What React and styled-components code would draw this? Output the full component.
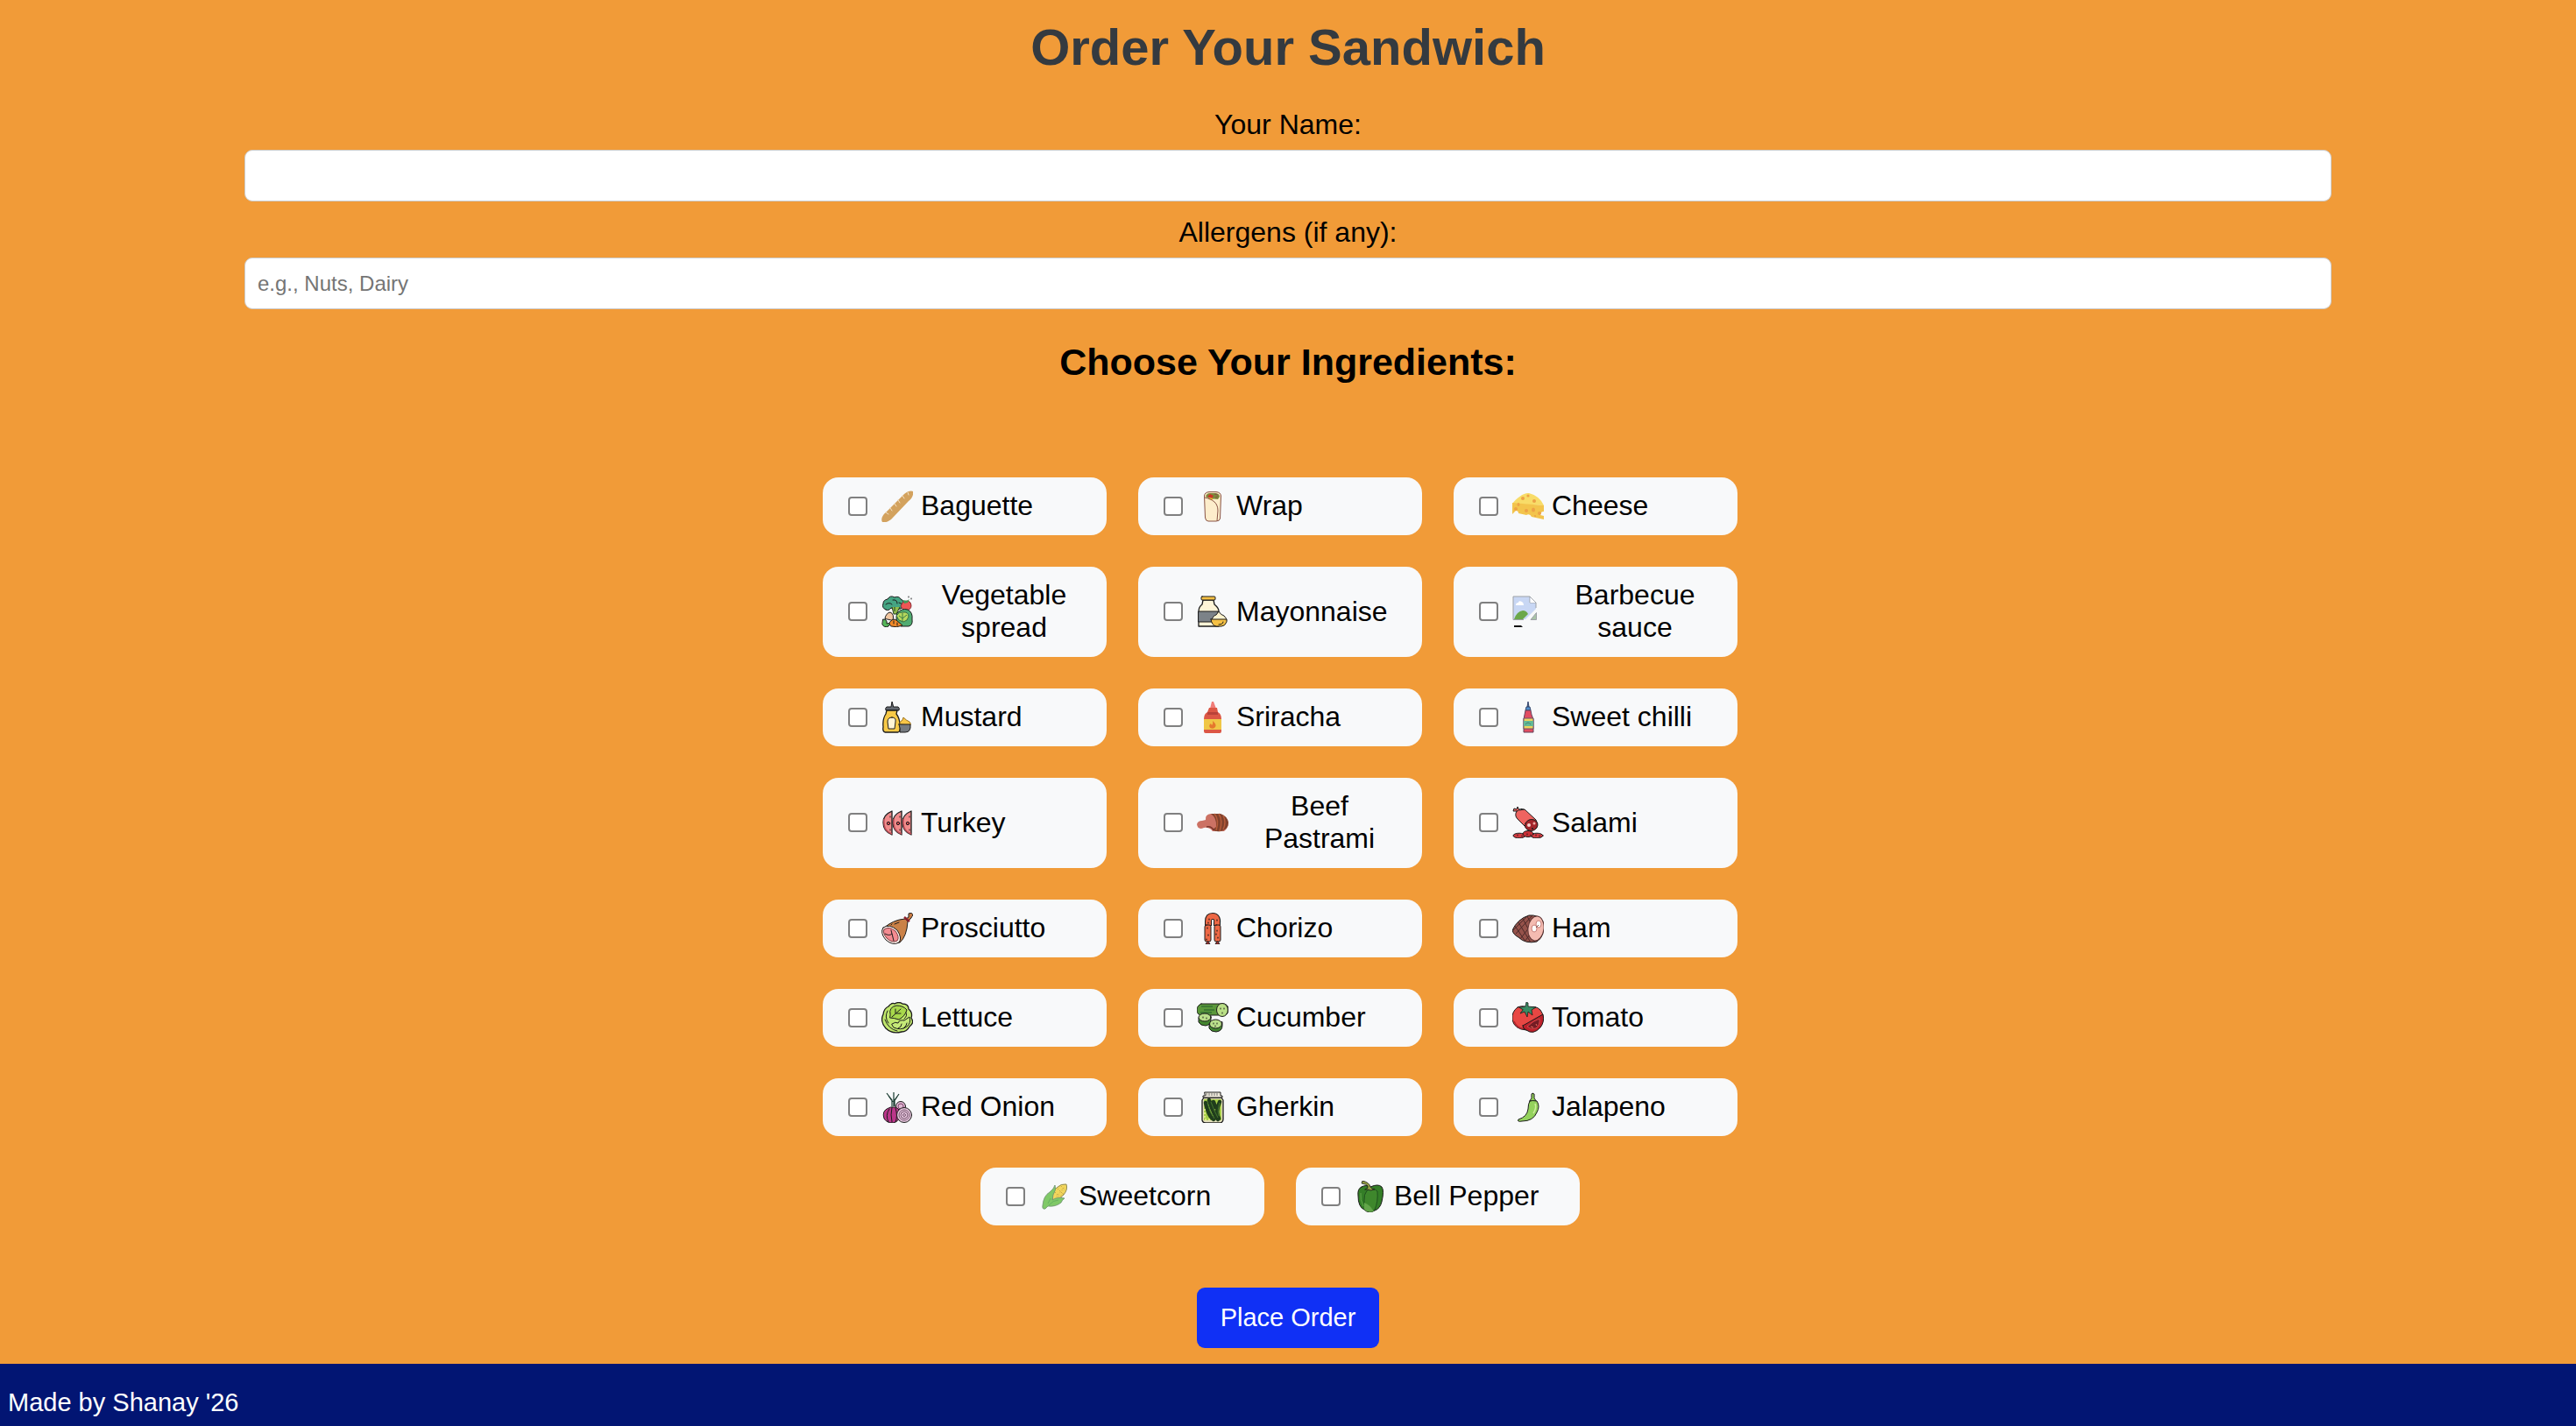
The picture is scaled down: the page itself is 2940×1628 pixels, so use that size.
import React from "react";
import styled, { createGlobalStyle } from "styled-components";

const GlobalStyle = createGlobalStyle`
  *, *::before, *::after { box-sizing: border-box; }
  body {
    margin: 0;
    background: #f19b38;
    color: #000;
    font-family: "Liberation Sans", Arial, sans-serif;
    font-size: 32px;
    line-height: 37px;
  }
`;

const Page = styled.div`
  min-height: 100vh;
  display: flex;
  flex-direction: column;
`;

const OrderForm = styled.form`
  display: flex;
  flex-direction: column;
  align-items: center;
  padding: 21px 0 18px;
  text-align: center;
`;

const Title = styled.h1`
  margin: 0 0 37px;
  color: #343a40;
  font-size: 58px;
  line-height: 66px;
`;

const Subtitle = styled.h2`
  margin: 18px 0 107px;
  font-size: 43px;
  line-height: 50px;
`;

const Field = styled.div`
  display: flex;
  flex-direction: column;
  align-items: center;
  gap: 10px;
  width: 100%;
  margin-bottom: 17px;
`;

const TextInput = styled.input`
  box-sizing: content-box;
  width: 80%;
  height: 29px;
  padding: 14px;
  border: 1px solid #ccc;
  border-radius: 9px;
  background: #fff;
  font-family: inherit;
  font-size: 24px;
  &::placeholder { color: #757575; opacity: 1; }
`;

const Ingredients = styled.div`
  display: flex;
  flex-wrap: wrap;
  justify-content: center;
  gap: 36px;
  max-width: 1170px;
  padding-right: 18px;
`;

const Card = styled.label`
  display: flex;
  align-items: center;
  width: 324px;
  padding: 14px 22px 15px 29px;
  border-radius: 18px;
  background: #f8f9fa;
`;

const Tick = styled.input`
  appearance: none;
  flex: none;
  width: 22px;
  height: 22px;
  margin: 0 16px 0 0;
  border: 2px solid #808080;
  border-radius: 4px;
  background: #fff;
  &:checked { background: #1030f5; }
`;

const Picture = styled.svg`
  flex: none;
  width: 36px;
  height: 36px;
  margin-right: 9px;
`;

const SubmitButton = styled.button`
  margin-top: 71px;
  padding: 18px 27px;
  border: 0;
  border-radius: 9px;
  background: #1030f5;
  color: #fff;
  font-family: inherit;
  font-size: 29px;
  line-height: 33px;
`;

const Footer = styled.footer`
  flex: 1;
  padding: 28px 9px 10px;
  background: #021573;
  color: #fff;
  font-size: 29px;
  line-height: 33px;
`;

const ink = { stroke: "#1c1c1c", strokeWidth: 1, strokeLinejoin: "round", strokeLinecap: "round" };

const art = {
  baguette: (
    <>
      <path d="M1 36C-1 33 1 28 5 25L26 4C30 0 35 0 36 1C37 4 35 9 31 12L12 32C8 36 3 37 1 36Z" fill="#d3a25e" />
      <path d="M5 25l3 2M10 20l2 3M15 15l2 3M19 11l2 3M24 6l2 3M30 2l1 3" stroke="#f3e2c6" strokeWidth="1" strokeLinecap="round" />
    </>
  ),
  wrap: (
    <>
      <path d="M8.500 6Q9 2 14 1.600H22Q27 2 27.500 6L26.500 32Q26 35 22 35H13Q10 35 9.500 31Z" fill="#fdedcb" stroke="#885344" strokeWidth="1" />
      <path d="M10 7Q11 3 15 3H22Q26 4 26 7L24 10Q19 9 16 10Z" fill="#7d8a3d" />
      <path d="M12 7l3-3 4 2-2 3z" fill="#cf3327" />
      <path d="M14 9l4 1" stroke="#efb836" strokeWidth="2" />
      <path d="M20 4l4 1M21 8l3-1" stroke="#885344" />
      <path d="M9 8C18 10 24 14 24 23L23 34.500" fill="none" stroke="#885344" />
    </>
  ),
  cheese: (
    <>
      <path d="M0 15C5 8 14 2 19 3Q31 6 36 17L0 15Z" fill="#f8dc68" />
      <path d="M0 14L36 17V24Q32 24 32 28L36 29V33L22 30Q20 26 16 28L7 26Q7 23 4 23L0 27Z" fill="#f3c44c" />
      <g fill="#eda245">
        <ellipse cx="12" cy="9" rx="2" ry="2" /><circle cx="18" cy="6" r="1.600" /><circle cx="25" cy="12" r="2" />
        <ellipse cx="7" cy="16" rx="1.500" ry="2" /><circle cx="4" cy="21" r="2" /><circle cx="16" cy="23" r="2" />
        <ellipse cx="24" cy="22" rx="2" ry="2.500" /><circle cx="31" cy="26" r="2" /><circle cx="26" cy="29" r="1" />
      </g>
    </>
  ),
  vegetables: (
    <>
      <path d="M5 16Q0 14 2 9Q2 5 7 4Q10-1 15 2Q20 0 22 4Q27 6 25 12L22 15L15 16L11 14Q8 18 5 16Z" fill="#45a583" {...ink} />
      <path d="M5 10q4-3 7 0M13 5q5-1 5 4M20 8q3 0 4 3" fill="none" {...ink} />
      <path d="M12 13L14 21H17L21 13M15 13v5" fill="#91bd4c" stroke="#253f21" />
      <path d="M24 8Q30 4 33 8Q36 14 30 17Q24 17 22 12Z" fill="#ed5655" stroke="#872d34" />
      <path d="M25 5l4 1 3-2-2 4-4 1z" fill="#3c9b58" />
      <path d="M18 20Q23 14 30 16Q36 19 35 27Q36 34 31 35H22Q17 32 17 25Z" fill="#51ac72" {...ink} />
      <path d="M17 23Q20 18 24 19Q31 18 31 24Q30 29 25 30L20 28Z" fill="#b7d85d" stroke="#336c43" />
      <path d="M24 20v9M20 23l4 3 5-4" fill="none" stroke="#397c47" />
      <path d="M4 26Q5 20 10 19Q15 21 13 28Z" fill="#f1c6a0" {...ink} />
      <path d="M2 27q5 0 4 5l5-1-3 4q-5 2-7-2z" fill="#55b65a" {...ink} />
      <path d="M9 31Q13 25 17 28L24 34Q17 37 11 35Z" fill="#f08927" {...ink} />
      <path d="M14 29v3M18 31v3M31 1v1M34 3v1" {...ink} />
    </>
  ),
  mayonnaise: (
    <>
      <path d="M7 5L6 10Q2 13 2 18V35H25V18Q25 14 20 10L19 5Z" fill="#fff5d7" {...ink} strokeWidth="1.300" />
      <rect x="5" y="1" width="16" height="4" rx="1" fill="#f5c044" {...ink} />
      <path d="M2 18H24V30H2Z" fill="#7c8288" {...ink} />
      <path d="M17 28Q18 23 22 22L25 18Q27 22 31 23Q34 26 34 28Z" fill="#fff4ce" {...ink} />
      <path d="M16 27H34V30Q32 35 28 35H22Q17 34 16 27Z" fill="#f5c145" {...ink} />
      <path d="M25 33q5 0 5-3" fill="none" {...ink} />
    </>
  ),
  missing: (
    <>
      <path d="M1 1H20L27 8V15L15 27H1Z" fill="#c8d7f4" />
      <path d="M4 11q0-3 3-3 0-3 4-1 2 1 2 4z" fill="#fff" />
      <path d="M2 27Q5 18 12 17Q16 17 18 21L12 27Z" fill="#6ba84a" />
      <path d="M27 14V8L20 1H1V27.500H13M20 1V8H27" fill="none" stroke="#9da1a6" />
      <path d="M20.500 8V2l6 6z" fill="#fff" />
      <path d="M21 27.500l6.500-8v8z" fill="#a9c4a8" stroke="#9da1a6" />
      <path d="M2 34H10L12 36H2Z" fill="#111" />
    </>
  ),
  mustard: (
    <>
      <path d="M12 0L11 6H6Q4 7 5 10H20Q21 7 19 6H14Z" fill="#636970" {...ink} />
      <path d="M6 10L5 14Q1 20 2 29Q1 34 4 35H19Q22 34 21 27Q21 19 17 14L18 10Z" fill="#f7c947" {...ink} strokeWidth="1.300" />
      <path d="M12 18Q17 18 16 23L15 31H8L7 23Q7 18 12 18Z" fill="#fff4d4" {...ink} />
      <path d="M21 26Q20 23 24 21L25 18Q29 22 32 23Q34 25 33 27Z" fill="#f8c647" stroke="#9d731f" />
      <path d="M20 26H33Q34 35 27 35H21Q22 31 20 26Z" fill="#767b80" {...ink} />
    </>
  ),
  sriracha: (
    <>
      <path d="M17 0h2l3 8h-7z" fill="#f07d78" />
      <path d="M14 7H23L24 12Q28 14 28 20V34Q28 36 26 36H10Q8 36 8 34V20Q8 14 12 12Z" fill="#dc5745" />
      <path d="M12 12h12v3h-12z" fill="#b94239" />
      <path d="M8 20H28V32H8Z" fill="#f0c746" />
      <path d="M18 22q5 4 3 7-2 3-6 1-2-3 1-5l1 2q2-2 1-5" fill="#e5782d" />
    </>
  ),
  chilli: (
    <>
      <path d="M18 0l1 6h-2z" fill="#45618c" stroke="#3a496f" />
      <path d="M16 6h4l1 4h-6z" fill="#5291cf" stroke="#34496e" />
      <path d="M15 10H21L22 15L24 20V35H13V20L14 15Z" fill="#e24d61" stroke="#62445d" strokeWidth="1" />
      <path d="M13 19H24V31H13Z" fill="#eed45d" stroke="#6c536b" strokeWidth="1" />
      <path d="M13 22h11v6H13z" fill="#62b995" />
      <path d="M15 26q3-4 6 0" stroke="#477d74" fill="none" />
    </>
  ),
  turkey: (
    <>
      {[0, 11, 22].map((x) => (
        <g key={x} transform={`translate(${x} 0)`}>
          <path d="M12 5Q2 9 2 18Q2 28 12 32Z" fill="#f08b8b" {...ink} strokeWidth="1.300" />
          <path d="M3 14q-1 11 5 15l4 2" stroke="#c0505a" strokeWidth="1.500" fill="none" />
          <circle cx="8" cy="19" r="1.700" fill="#d94950" {...ink} />
          <path d="M10 11v1M10 26v1" {...ink} />
        </g>
      ))}
    </>
  ),
  pastrami: (
    <>
      <path d="M10 15Q9 9 16 8H25Q34 10 36 18Q36 24 31 28H18Q14 23 8 24Q1 27 0 20Q1 16 6 16Z" fill="#cc7264" />
      <path d="M16 8H27Q35 11 36 18Q36 26 27 28Q21 29 18 26L22 23Q23 13 16 8Z" fill="#80412c" />
      <path d="M20 8Q26 15 22 27M25 8Q30 16 26 28M30 10Q34 18 30 26" fill="none" stroke="#b65c3a" strokeWidth="1.500" />
      <path d="M11 23q6-1 8 4" fill="none" stroke="#79362c" strokeWidth="1.500" />
    </>
  ),
  salami: (
    <>
      <path d="M5 5L1 5L2 2L5 3L6 0L8 4L14 3L27 15Q30 19 27 25Q22 28 17 25L6 14Q2 10 5 5Z" fill="#ef6460" {...ink} />
      <path d="M6 5Q9 1 13 3" fill="none" {...ink} />
      <path d="M15 19Q18 13 25 15Q31 18 28 24Q23 30 17 26Q13 23 15 19Z" fill="#a4262c" {...ink} />
      <circle cx="19" cy="21" r="2" fill="#f7d4ce" /><circle cx="25" cy="19" r="1.500" fill="#efaaa4" /><circle cx="23" cy="25" r="1" fill="#1c1c1c" />
      <ellipse cx="8" cy="33" rx="7" ry="2.800" fill="#d53b40" {...ink} />
      <ellipse cx="28" cy="33" rx="7" ry="2.800" fill="#d53b40" {...ink} />
      <ellipse cx="18" cy="31" rx="6" ry="3.500" fill="#ca3036" {...ink} />
      <path d="M6 32v1M11 33v1M17 31v1M21 32v1M27 32v1M31 33v1" {...ink} />
    </>
  ),
  prosciutto: (
    <>
      <path d="M28 7L31 5L31 1Q35-1 36 3Q34 5 34 6L30 10Z" fill="#c67a43" {...ink} />
      <path d="M2 18Q13 8 27 7L30 10Q29 27 21 34Q12 36 5 29Q-1 22 2 18Z" fill="#ca8147" {...ink} />
      <path d="M26 5l6 5" stroke="#8b222d" strokeWidth="2.500" />
      <path d="M2 17Q9 12 18 20Q24 29 20 34Q13 38 5 31Q-2 23 2 17Z" fill="#fff1eb" {...ink} />
      <path d="M3 19Q9 15 16 21Q21 28 18 32Q12 35 6 29Q1 23 3 19Z" fill="#f48b91" stroke="#7d3c40" />
      <path d="M4 24Q9 27 12 24L14 32M12 24l-1-4M15 13l5-2M11 14l1-1" fill="none" {...ink} />
    </>
  ),
  chorizo: (
    <>
      <path d="M13 15V10Q13 4 18 4Q24 4 23 12V15" fill="none" stroke="#1c1c1c" strokeWidth="8" />
      <path d="M13 15V10Q13 4 18 4Q24 4 23 12V15" fill="none" stroke="#ed6845" strokeWidth="6" />
      <rect x="9" y="14" width="7" height="19" rx="2" fill="#ee6845" {...ink} />
      <rect x="20" y="14" width="7" height="19" rx="2" fill="#ee6845" {...ink} />
      <path d="M12 33l-2 3h5l-2-3M23 33l-2 3h5l-2-3" fill="#b43434" {...ink} />
      <path d="M13 11v1M14 7v1M23 8v1M12 17v1M13 25v1M23 20v1M24 28v1M11 30v1M22 24v1" {...ink} strokeWidth="1.200" />
    </>
  ),
  ham: (
    <>
      <path d="M0 20Q6 7 19 3Q30 2 35 10Q38 27 28 33Q15 36 7 28Q1 25 0 20Z" fill="#95524a" {...ink} />
      <path d="M3 15L15 33M7 11L21 34M12 7L26 33M17 4L30 29M23 3L4 24M17 4L1 20M27 7L9 30M28 14L14 33" stroke="#4b2929" />
      <ellipse cx="27" cy="18" rx="9" ry="14" fill="#f4bbb1" stroke="#5e3534" transform="rotate(7 27 18)" />
      <ellipse cx="30" cy="13" rx="3" ry="4" fill="#fff" stroke="#c97d77" />
      <ellipse cx="25" cy="18" rx="3" ry="4" fill="#fff" stroke="#c97d77" />
      <path d="M27 17l3-3" stroke="#77514f" />
    </>
  ),
  lettuce: (
    <>
      <path d="M8 5Q12 0 15 2Q20-1 24 2Q31 2 31 8Q36 12 34 18Q38 24 32 28Q29 34 23 34Q12 37 5 30Q-2 22 2 14Q3 7 8 5Z" fill="#bfe66c" {...ink} strokeWidth="1.300" />
      <path d="M10 14Q8 6 17 4Q25 4 29 9Q27 16 20 20Q14 18 10 18Z" fill="#a8d84b" {...ink} />
      <path d="M12 17L22 8M16 13V8M17 13H22M7 10Q3 17 8 24M4 20Q8 31 18 33M28 12q2 4-2 7" fill="none" {...ink} />
      <path d="M12 25Q16 22 19 24Q20 20 26 21L32 17Q34 24 29 28Q22 33 14 29Z" fill="#c5e978" {...ink} />
      <path d="M19 30l3-2 1-3M25 30l3-3 1-3" fill="none" {...ink} />
    </>
  ),
  cucumber: (
    <>
      <path d="M5 2H31Q36 3 36 9Q35 16 30 15H6Q0 15 0 9Q0 4 5 2Z" fill="#5a983b" {...ink} />
      <path d="M5 5H18M8 9H20M4 12H17" stroke="#235d2c" strokeWidth="1.200" />
      <ellipse cx="29" cy="9" rx="6.500" ry="7.500" fill="#b9df86" {...ink} />
      <path d="M2 18V23Q4 27 10 27Q16 26 16 20L16 16Z" fill="#438530" {...ink} />
      <ellipse cx="9" cy="17.500" rx="7" ry="4.500" fill="#badf8b" {...ink} />
      <path d="M14 25V30Q16 34 22 34Q29 33 29 27V23Z" fill="#438530" {...ink} />
      <ellipse cx="21.500" cy="25" rx="7" ry="5" fill="#badf8b" {...ink} />
      <path d="M27 7v1M31 7v1M29 12v1M7 17v1M11 18v1M19 24v1M23 24v1M21 27v1" {...ink} />
    </>
  ),
  tomato: (
    <>
      <path d="M6 6Q13 3 18 7Q26 3 32 9Q38 17 33 26Q27 32 16 32Q2 31 0 20Q-1 11 6 6Z" fill="#e84743" {...ink} />
      <path d="M2 22q4 9 12 8" fill="none" stroke="#b6252f" strokeWidth="1.500" />
      <path d="M8 6L15 5L16 0L18 1V5L27 6L22 9L23 15L18 11L17 17L14 11L9 13L12 9Z" fill="#388b63" {...ink} strokeWidth="0.800" />
      <path d="M12 27L35 14Q37 23 32 29Q24 38 16 32Q12 31 12 27Z" fill="#bd202a" {...ink} />
      <path d="M17 28Q24 21 31 19Q32 26 27 30Q21 32 17 28Z" fill="#751c24" stroke="#d9484b" />
      <path d="M21 28l3 1M27 25l1 2" stroke="#ef6c5d" />
    </>
  ),
  onion: (
    <>
      <path d="M12 17V10L6 2M14 17V1M15 17V10L20 3M13 12L8 5M14 12L18 6" fill="none" stroke="#17392e" strokeWidth="1.200" />
      <circle cx="22" cy="17" r="5.500" fill="#dfb7d2" {...ink} /><circle cx="22" cy="17" r="3" fill="none" stroke="#82436f" />
      <path d="M11 18H16Q23 21 21 29Q19 35 13 36Q6 36 3 31Q0 22 8 19Z" fill="#bb368a" {...ink} />
      <path d="M9 20Q4 27 8 35M12 18Q10 27 12 35M16 19Q19 28 16 35" fill="none" {...ink} />
      <circle cx="26" cy="27" r="8.500" fill="#e6c6dd" {...ink} />
      <g fill="none" stroke="#77556e"><circle cx="26" cy="27" r="6" /><circle cx="26" cy="27" r="4" /><circle cx="26" cy="27" r="1.500" /></g>
    </>
  ),
  gherkin: (
    <>
      <path d="M8 7L6 10V33Q7 36 10 36H27Q30 35 30 32V10L28 7Z" fill="#e3dfbc" {...ink} strokeWidth="1.300" />
      <path d="M8 9H28V33H8Z" fill="#a8cf48" />
      <path d="M9 1H27V5H29V7H7V5H9Z" fill="#efeadb" {...ink} />
      <path d="M11 2v3M14 2v3M17 2v3M20 2v3M23 2v3" stroke="#777" />
      <path d="M10 13Q13 28 19 32M14 10Q18 24 24 32M26 12Q21 22 25 31M19 12L21 18" fill="none" stroke="#203d1c" strokeWidth="4.500" strokeLinecap="round" />
      <path d="M12 13Q15 25 20 31M16 12Q20 23 24 30M26 13Q23 22 25 28" fill="none" stroke="#45772d" strokeWidth="1" />
      <path d="M9 20v12h7" fill="none" stroke="#ebf394" strokeWidth="1.500" strokeDasharray="2 2" />
    </>
  ),
  jalapeno: (
    <>
      <path d="M20 11Q23 8 22 3L23 2L25 3Q24 8 27 11Z" fill="#8dcc53" {...ink} />
      <path d="M20 11Q23 10 28 11Q32 17 28 24Q24 34 11 34Q5 35 7 32Q17 29 18 20Q18 14 20 11Z" fill="#94d25d" {...ink} />
      <path d="M26 14Q28 19 24 25" fill="none" stroke="#d1ed9e" strokeWidth="1.500" />
    </>
  ),
  sweetcorn: (
    <>
      <path d="M15 20Q15 12 20 8Q25 3 31 4Q33 10 28 16Q24 21 17 23Z" fill="#f2d65c" stroke="#918c55" />
      <path d="M21 9l7 7M25 6l4 5M18 13l6 6M20 18l9-11M23 20l5-7" stroke="#b79642" strokeDasharray="1 2" />
      <path d="M18 5Q20 10 16 16L15 22Q20 18 29 20Q26 22 25 25Q19 30 10 29L7 32Q3 33 4 28Q5 17 12 13Q17 9 18 5Z" fill="#80c967" stroke="#6f8f71" strokeWidth="0.800" />
      <path d="M13 20L10 26M22 22Q16 22 11 28" fill="none" stroke="#5faa60" strokeWidth="0.800" />
    </>
  ),
  pepper: (
    <>
      <path d="M8 7Q13 4 18 7Q27 3 31 7Q34 11 31 24Q29 32 23 34Q16 38 11 33Q4 30 4 17Q3 9 8 7Z" fill="#347e27" {...ink} />
      <path d="M18 9Q8 12 12 32Q19 38 23 33Q27 24 26 12Q23 8 18 9Z" fill="#3e872c" stroke="#1f501e" />
      <path d="M11 25Q17 27 22 35Q15 37 11 33Z" fill="#63a54a" />
      <path d="M7 14Q6 22 10 29" fill="none" stroke="#62a649" />
      <path d="M12 10Q16 9 15 6Q14 4 8 3L9 0Q17 2 18 7Q20 10 23 10L18 11L15 10Z" fill="#929c42" {...ink} strokeWidth="0.800" />
    </>
  ),
};

const ingredients = [
  ["Baguette", "baguette"], ["Wrap", "wrap"], ["Cheese", "cheese"],
  ["Vegetable spread", "vegetables"], ["Mayonnaise", "mayonnaise"], ["Barbecue sauce", "missing"],
  ["Mustard", "mustard"], ["Sriracha", "sriracha"], ["Sweet chilli", "chilli"],
  ["Turkey", "turkey"], ["Beef Pastrami", "pastrami"], ["Salami", "salami"],
  ["Prosciutto", "prosciutto"], ["Chorizo", "chorizo"], ["Ham", "ham"],
  ["Lettuce", "lettuce"], ["Cucumber", "cucumber"], ["Tomato", "tomato"],
  ["Red Onion", "onion"], ["Gherkin", "gherkin"], ["Jalapeno", "jalapeno"],
  ["Sweetcorn", "sweetcorn"], ["Bell Pepper", "pepper"],
];

function Ingredient({ name, icon }) {
  return (
    <Card htmlFor={icon}>
      <Tick type="checkbox" id={icon} name="ingredients" value={name} />
      <Picture viewBox="0 0 36 36" aria-hidden="true">{art[icon]}</Picture>
      <span>{name}</span>
    </Card>
  );
}

export default function App() {
  return (
    <Page>
      <GlobalStyle />
      <OrderForm onSubmit={(event) => event.preventDefault()}>
        <Title>Order Your Sandwich</Title>
        <Field>
          <label htmlFor="name">Your Name:</label>
          <TextInput id="name" type="text" />
        </Field>
        <Field>
          <label htmlFor="allergens">Allergens (if any):</label>
          <TextInput id="allergens" type="text" placeholder="e.g., Nuts, Dairy" />
        </Field>
        <Subtitle>Choose Your Ingredients:</Subtitle>
        <Ingredients>
          {ingredients.map(([name, icon]) => <Ingredient key={icon} name={name} icon={icon} />)}
        </Ingredients>
        <SubmitButton type="submit">Place Order</SubmitButton>
      </OrderForm>
      <Footer>Made by Shanay '26</Footer>
    </Page>
  );
}
